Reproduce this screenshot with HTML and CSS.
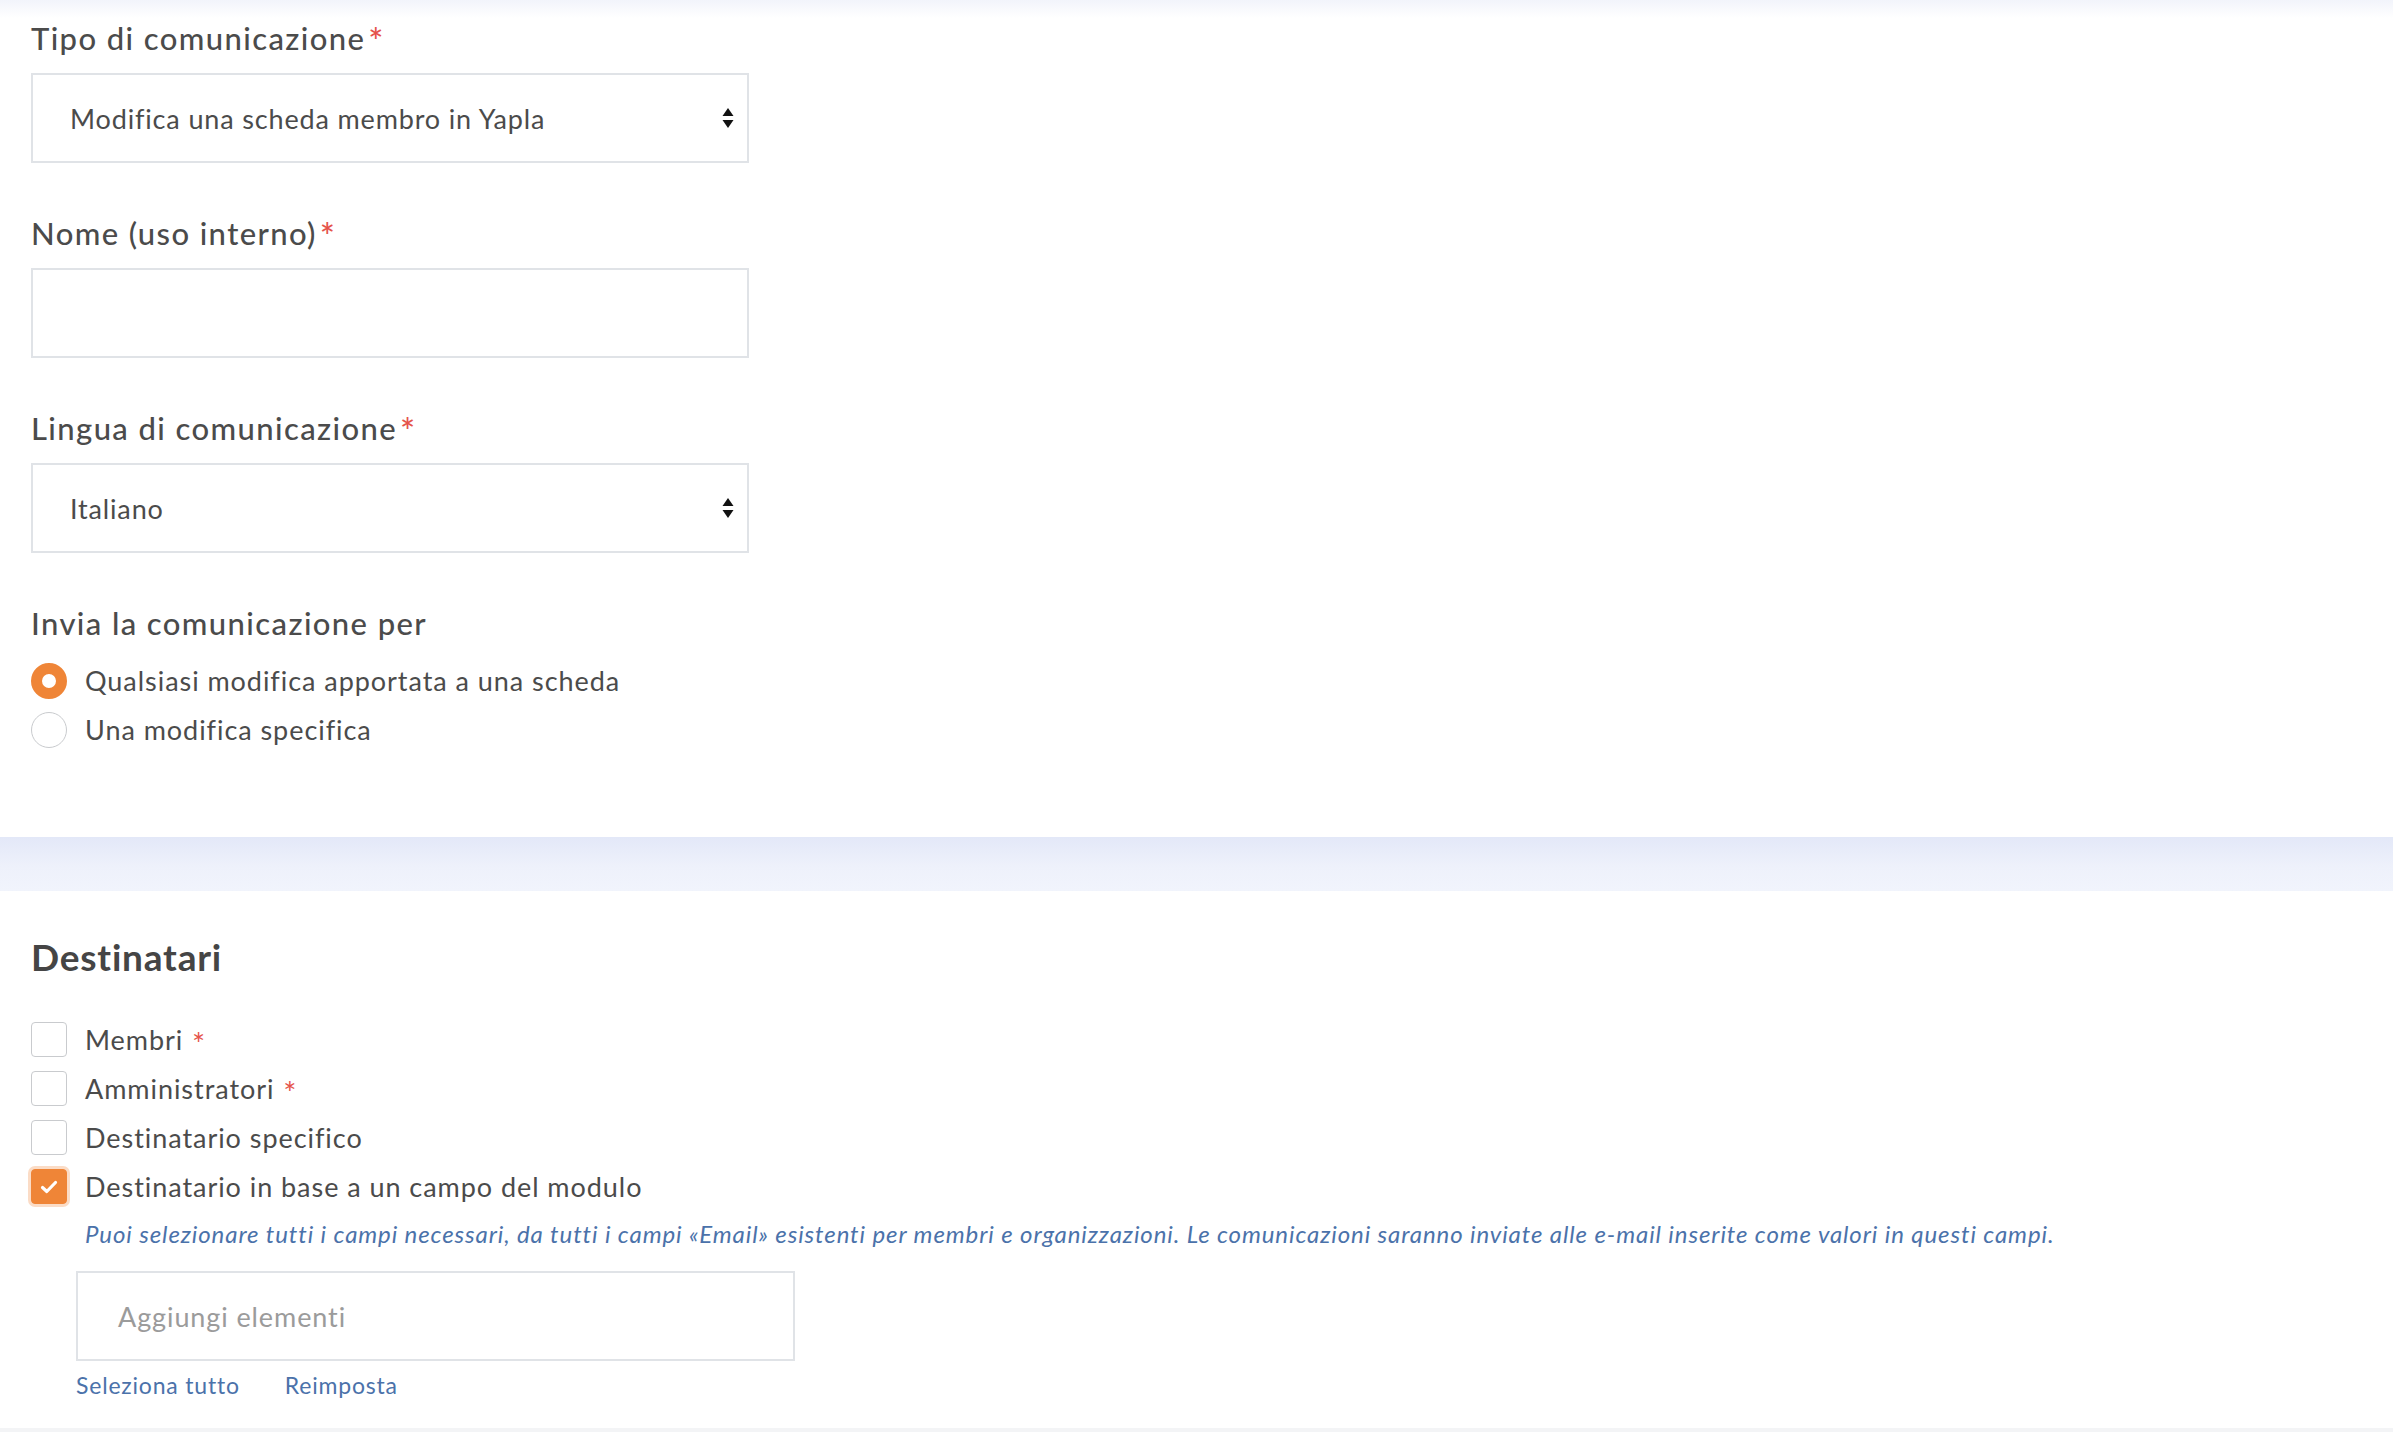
FILE: index.html
```html
<!DOCTYPE html>
<html lang="it">
<head>
<meta charset="utf-8">
<title>Comunicazione</title>
<link rel="stylesheet" href="styles.css">
</head>
<body>
<div class="page">
  <section class="card card-top">
    <div class="field">
      <div class="label">Tipo di comunicazione<span class="req">*</span></div>
      <div class="control select">
        <span class="value">Modifica una scheda membro in Yapla</span>
        <svg class="arrows" width="12" height="22" viewBox="0 0 12 22"><path d="M6 1 L11.5 9 L0.5 9 Z" fill="#111"/><path d="M6 21 L11.5 13 L0.5 13 Z" fill="#111"/></svg>
      </div>
    </div>
    <div class="field">
      <div class="label">Nome (uso interno)<span class="req">*</span></div>
      <div class="control"></div>
    </div>
    <div class="field">
      <div class="label">Lingua di comunicazione<span class="req">*</span></div>
      <div class="control select">
        <span class="value">Italiano</span>
        <svg class="arrows" width="12" height="22" viewBox="0 0 12 22"><path d="M6 1 L11.5 9 L0.5 9 Z" fill="#111"/><path d="M6 21 L11.5 13 L0.5 13 Z" fill="#111"/></svg>
      </div>
    </div>
    <div class="field field-last">
      <div class="label">Invia la comunicazione per</div>
      <div class="options">
        <div class="option"><span class="radio checked"></span><span class="opt-text">Qualsiasi modifica apportata a una scheda</span></div>
        <div class="option"><span class="radio"></span><span class="opt-text">Una modifica specifica</span></div>
      </div>
    </div>
  </section>
  <div class="band"></div>
  <section class="card card-bottom">
    <h2 class="heading">Destinatari</h2>
    <div class="options">
      <div class="option"><span class="checkbox"></span><span class="opt-text">Membri <span class="req">*</span></span></div>
      <div class="option"><span class="checkbox"></span><span class="opt-text">Amministratori <span class="req">*</span></span></div>
      <div class="option"><span class="checkbox"></span><span class="opt-text">Destinatario specifico</span></div>
      <div class="option"><span class="checkbox checked"><svg width="18" height="14" viewBox="0 0 18 14"><path d="M2.5 7.5 L6.8 11.5 L15.5 2.5" fill="none" stroke="#fff" stroke-width="3.2" stroke-linecap="round" stroke-linejoin="round"/></svg></span><span class="opt-text">Destinatario in base a un campo del modulo</span></div>
    </div>
    <div class="sub">
      <p class="help">Puoi selezionare tutti i campi necessari, da tutti i campi «Email» esistenti per membri e organizzazioni. Le comunicazioni saranno inviate alle e-mail inserite come valori in questi campi.</p>
      <div class="control multi"><span class="placeholder">Aggiungi elementi</span></div>
      <div class="links"><a class="link">Seleziona tutto</a><a class="link">Reimposta</a></div>
    </div>
  </section>
  <div class="band band-end"></div>
</div>
</body>
</html>
```

FILE: styles.css
```css
* { box-sizing: border-box; }
html, body { margin: 0; padding: 0; background: #ffffff; }
body {
  font-family: "Lato", "Noto Sans", sans-serif;
  color: #4b4b4b;
}
.page { display: flex; flex-direction: column; }
.card { background: #fff; padding-left: 31px; }
.card-top {
  padding-top: 19px;
  padding-bottom: 83px;
  background: linear-gradient(to bottom, #f2f4fb 0px, #ffffff 18px, #ffffff 100%);
}
.band {
  height: 54px;
  background: linear-gradient(to bottom, #e3e8f8 0%, #eef1fb 55%, #f1f4fc 100%);
}
.band-end { height: 20px; background: #f3f4f6; }
.field { margin-bottom: 51px; }
.field-last { margin-bottom: 0; }
.label {
  font-size: 31px;
  line-height: 38px;
  font-weight: 500;
  letter-spacing: 1.4px;
  margin-bottom: 16px;
}
.req {
  color: #e5534b;
  margin-left: 3px;
  font-size: 1.15em;
  line-height: 0;
  vertical-align: -5px;
}
.opt-text .req { margin-left: 1px; }
.control {
  width: 718px;
  height: 90px;
  border: 2px solid #e0e3e7;
  background: #fff;
  display: flex;
  align-items: center;
}
.select { padding: 0 13px 0 37px; justify-content: space-between; }
.value { font-size: 27px; letter-spacing: 0.85px; }
.options { display: flex; flex-direction: column; }
.field-last .label { margin-bottom: 14px; }
.option {
  display: flex;
  align-items: center;
  height: 49px;
  gap: 18px;
}
.opt-text { font-size: 27px; line-height: 32px; letter-spacing: 0.95px; }
.radio {
  width: 36px; height: 36px;
  border-radius: 50%;
  border: 1.5px solid #c9cbce;
  background: #fff;
  flex: none;
}
.radio.checked {
  border: 11px solid #ef8537;
  background: #fff;
}
.heading {
  margin: 0 0 36px 0;
  font-size: 37px;
  line-height: 44px;
  font-weight: 700;
  letter-spacing: 0.8px;
  color: #454545;
}
.card-bottom { padding-top: 44px; padding-bottom: 28px; }
.checkbox {
  width: 36px; height: 35px;
  border: 1.5px solid #c9cbce;
  border-radius: 4px;
  background: #fff;
  flex: none;
  display: flex;
  align-items: center;
  justify-content: center;
}
.checkbox.checked {
  background: #ef8537;
  border-color: #ef8537;
  box-shadow: 0 0 0 3px #fbdcc6;
}
.sub { padding-left: 45px; padding-top: 8px; }
.help {
  margin: 0 0 22px 9px;
  font-size: 24px;
  line-height: 30px;
  font-style: italic;
  letter-spacing: 0.9px;
  color: #4b72aa;
}
.multi { width: 719px; padding-left: 40px; }
.placeholder { font-size: 27px; letter-spacing: 0.9px; color: #9b9b9b; }
.links { display: flex; gap: 45px; margin-top: 9px; }
.link { font-size: 23px; line-height: 30px; letter-spacing: 0.8px; color: #4b72aa; text-decoration: none; }
```
